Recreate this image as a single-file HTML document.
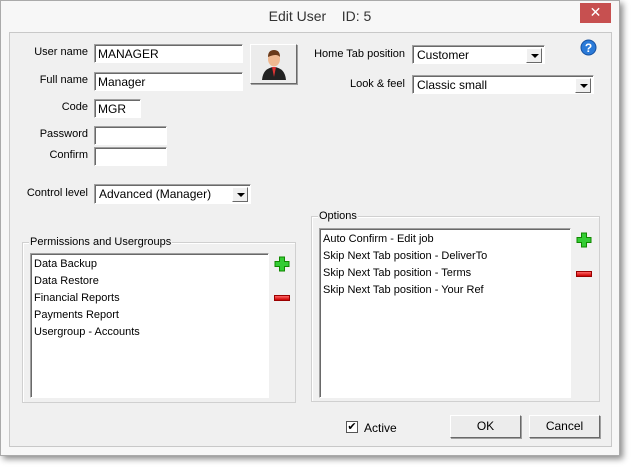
<!DOCTYPE html>
<html><head><style>
*{box-sizing:border-box;margin:0;padding:0}
body{width:632px;height:468px;background:#fff;position:relative;overflow:hidden;font-family:"Liberation Sans",sans-serif;font-size:11px;color:#000}
.a{position:absolute}
.frame{left:0;top:0;width:620px;height:456px;background:#f7f7f7;border:1px solid #aaa;box-shadow:3px 3px 6px rgba(0,0,0,.45)}
.client{left:9px;top:32px;width:603px;height:415px;background:#f0f0f0;border:1px solid #c8c8c8}
.lbl{text-align:right;width:120px}
.inp{background:#fff;border:1px solid;border-color:#a0a0a0 #fff #fff #a0a0a0;box-shadow:inset 1px 1px 0 #696969;padding:1px 3px;font-size:12px;line-height:16px}
.cb{background:#fff;border:1px solid;border-color:#a0a0a0 #fff #fff #a0a0a0;box-shadow:inset 1px 1px 0 #696969;padding:1px 4px;font-size:12px;line-height:16px}
.arr{position:absolute;right:2px;top:2px;width:16px;height:15px;background:#f0f0f0;border:1px solid;border-color:#fff #696969 #696969 #fff}
.arr:after{content:"";position:absolute;left:4px;top:5px;border-left:4px solid transparent;border-right:4px solid transparent;border-top:4px solid #000}
.grp{border:1px solid #d0d0d0;box-shadow:inset 1px 1px 0 #fff}
.gt{position:absolute;top:-7px;left:6px;background:#f0f0f0;padding:0 1px;font-size:11px}
.list{background:#fff;border:1px solid;border-color:#a0a0a0 #fff #fff #a0a0a0;box-shadow:inset 1px 1px 0 #696969;padding:2px 3px;font-size:11px;line-height:17px}
.btn{background:#ececec;border:1px solid;border-color:#fff #696969 #696969 #fff;box-shadow:1px 1px 0 #a0a0a0;text-align:center;line-height:21px;font-size:12px}
.plus{width:14px;height:14px}
.minus{width:16px;height:6px;background:linear-gradient(#f66,#c00);border:1px solid #900}
</style></head><body>
<div class="a frame"></div>
<div class="a" style="left:0;top:0;width:620px;text-align:center;top:8px;font-size:14px;color:#333;padding-right:0"><span style="margin-left:20px">Edit User&nbsp;&nbsp;&nbsp; ID: 5</span></div>
<div class="a" style="left:580px;top:3px;width:31px;height:20px;background:#c75050;color:#fff;text-align:center;font-size:14px;line-height:19px">✕</div>
<div class="a client"></div>

<div class="a lbl" style="left:-32px;top:46px">User name</div>
<div class="a inp" style="left:94px;top:44px;width:149px;height:19px">MANAGER</div>
<div class="a lbl" style="left:-32px;top:74px">Full name</div>
<div class="a inp" style="left:94px;top:72px;width:149px;height:19px">Manager</div>
<div class="a lbl" style="left:-32px;top:101px">Code</div>
<div class="a inp" style="left:94px;top:99px;width:47px;height:19px">MGR</div>
<div class="a lbl" style="left:-32px;top:128px">Password</div>
<div class="a inp" style="left:94px;top:126px;width:73px;height:19px"></div>
<div class="a lbl" style="left:-32px;top:149px">Confirm</div>
<div class="a inp" style="left:94px;top:147px;width:73px;height:19px"></div>

<div class="a btn" style="left:250px;top:44px;width:47px;height:40px"></div>
<svg class="a" style="left:259px;top:46px" width="30" height="36" viewBox="0 0 30 36">
<path d="M3 34 Q4 22 15 21 Q26 22 27 34Z" fill="#222"/>
<path d="M13 21 L15 31 L17 21Z" fill="#d33"/>
<ellipse cx="15" cy="13" rx="6" ry="7.5" fill="#f0b890"/>
<path d="M9 11 Q9 4 15 4 Q21 4 21 11 Q18 7 9 11Z" fill="#6b3a1a"/>
</svg>

<div class="a lbl" style="left:285px;top:48px">Home Tab position</div>
<div class="a cb" style="left:412px;top:45px;width:133px;height:19px">Customer<div class="arr"></div></div>
<div class="a lbl" style="left:285px;top:78px">Look &amp; feel</div>
<div class="a cb" style="left:412px;top:75px;width:182px;height:19px">Classic small<div class="arr"></div></div>
<svg class="a" style="left:580px;top:39px" width="17" height="17"><circle cx="8.5" cy="8.5" r="7.5" fill="#2a7ad8" stroke="#1550a0"/><text x="8.5" y="13" font-size="12" font-weight="bold" fill="#fff" text-anchor="middle" font-family="Liberation Sans">?</text></svg>

<div class="a lbl" style="left:-32px;top:187px">Control level</div>
<div class="a cb" style="left:94px;top:184px;width:157px;height:20px">Advanced (Manager)<div class="arr"></div></div>

<div class="a grp" style="left:22px;top:242px;width:274px;height:161px"><span class="gt">Permissions and Usergroups</span></div>
<div class="a list" style="left:30px;top:253px;width:239px;height:145px">Data Backup<br>Data Restore<br>Financial Reports<br>Payments Report<br>Usergroup - Accounts</div>
<svg class="a" style="left:274px;top:256px" width="16" height="16"><path d="M5.5 1h5v4.5h4.5v5h-4.5v4.5h-5v-4.5h-4.5v-5h4.5z" fill="#3c3" stroke="#180"/></svg>
<div class="a minus" style="left:274px;top:295px"></div>

<div class="a grp" style="left:311px;top:216px;width:289px;height:186px"><span class="gt">Options</span></div>
<div class="a list" style="left:319px;top:228px;width:252px;height:170px">Auto Confirm - Edit job<br>Skip Next Tab position - DeliverTo<br>Skip Next Tab position - Terms<br>Skip Next Tab position - Your Ref</div>
<svg class="a" style="left:576px;top:232px" width="16" height="16"><path d="M5.5 1h5v4.5h4.5v5h-4.5v4.5h-5v-4.5h-4.5v-5h4.5z" fill="#3c3" stroke="#180"/></svg>
<div class="a minus" style="left:576px;top:271px"></div>

<div class="a" style="left:346px;top:421px;width:12px;height:12px;background:#fff;border:1px solid #555;font-size:11px;line-height:10px;text-align:center">✔</div>
<div class="a" style="left:364px;top:421px;font-size:12px">Active</div>
<div class="a btn" style="left:450px;top:415px;width:71px;height:23px">OK</div>
<div class="a btn" style="left:529px;top:415px;width:71px;height:23px">Cancel</div>
</body></html>
